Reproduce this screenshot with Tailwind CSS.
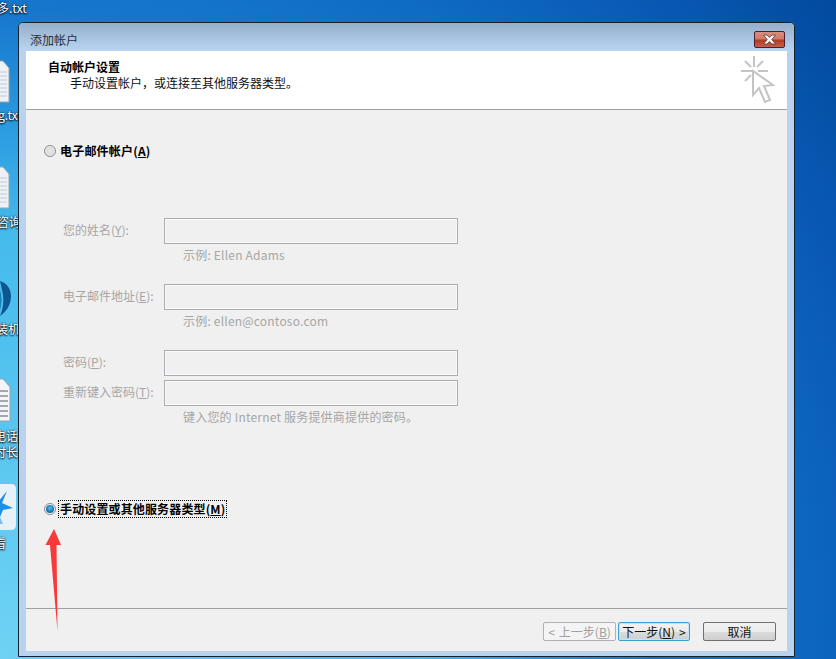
<!DOCTYPE html>
<html lang="zh">
<head>
<meta charset="utf-8">
<script src="https://cdn.jsdelivr.net/npm/@tailwindcss/browser@4"></script>
</head>
<body class="m-0 overflow-hidden">
<div class="relative w-[836px] h-[659px] overflow-hidden font-['Noto_Sans_CJK_SC','Liberation_Sans',sans-serif] bg-[radial-gradient(circle_at_0%_100%,#6fd2f4_0%,#45bbec_40%,#2a9be0_50%,#1676cc_61%,#0f6cc4_72%,#0a5cb8_84%,#024a9e_100%)]">

  <!-- desktop icons -->
  <div class="absolute left-[-3px] top-0 text-white text-[12px] leading-4 whitespace-nowrap [text-shadow:0_0_2px_#000,0_1px_2px_#000]">多.txt</div>

  <svg class="absolute left-0 top-[60px]" width="10" height="44" viewBox="0 0 10 44"><path d="M-8 1H3L9 8V42H-8Z" fill="#eef1f6" stroke="#9aa3ad"/><path d="M-6 12H7M-6 16H7M-6 20H7M-6 24H7M-6 28H7M-6 32H7M-6 36H7" stroke="#c3cad4"/></svg>
  <div class="absolute left-[-2px] top-[107px] whitespace-nowrap text-white text-[12px] leading-4 [text-shadow:0_0_2px_#000,0_1px_2px_#000]">g.txt</div>

  <svg class="absolute left-0 top-[166px]" width="10" height="44" viewBox="0 0 10 44"><path d="M-8 1H3L9 8V42H-8Z" fill="#eef1f6" stroke="#9aa3ad"/><path d="M-6 12H7M-6 16H7M-6 20H7M-6 24H7M-6 28H7M-6 32H7M-6 36H7" stroke="#c3cad4"/></svg>
  <div class="absolute left-[-3px] top-[214px] whitespace-nowrap text-white text-[12px] leading-4 [text-shadow:0_0_2px_#000,0_1px_2px_#000]">咨询</div>

  <svg class="absolute left-0 top-[281px]" width="12" height="36" viewBox="0 0 12 36"><path d="M0 0C7 2 11 8 11 15C11 24 6 31 0 35C3 28 4 21 3 14C2 9 1 4 0 0Z" fill="#0e568f"/><path d="M0 9C2 15 2 23 0 29Z" fill="#1a7fb8"/></svg>
  <div class="absolute left-[-4px] top-[321px] whitespace-nowrap text-white text-[12px] leading-4 [text-shadow:0_0_2px_#000,0_1px_2px_#000]">装机</div>

  <svg class="absolute left-0 top-[378px]" width="11" height="44" viewBox="0 0 11 44"><path d="M-8 1H3L10 9V43H-8Z" fill="#f2f4f7" stroke="#9aa3ad"/><path d="M0 13H8M0 18H8M0 23H8M0 28H8M0 33H8M0 38H8" stroke="#555c66"/></svg>
  <div class="absolute left-[-6px] top-[428px] whitespace-nowrap text-white text-[12px] leading-4 [text-shadow:0_0_2px_#000,0_1px_2px_#000]">电话</div>
  <div class="absolute left-[-6px] top-[444px] whitespace-nowrap text-white text-[12px] leading-4 [text-shadow:0_0_2px_#000,0_1px_2px_#000]">时长</div>

  <svg class="absolute left-0 top-[484px]" width="17" height="47" viewBox="0 0 17 47"><path d="M-6 0H11Q16 0 16 5V41Q16 46 11 46H-6Z" fill="#e6f1fa"/><path d="M7 7L2 19L13 24L3 26L0 33L-1 25L-2 18Z" fill="#1c8fe8"/><path d="M0 33L3 40H-1Z" fill="#7fbcec"/></svg>
  <div class="absolute left-[-6px] top-[535px] whitespace-nowrap text-white text-[12px] leading-4 [text-shadow:0_0_2px_#000,0_1px_2px_#000]">看</div>

  <!-- dialog window -->
  <div class="absolute left-[18px] top-[22px] w-[777px] h-[635px] rounded-t-[5px] border border-[#14222e] flex flex-col bg-[#b9d3ef]">
    <!-- title bar -->
    <div class="h-[28px] shrink-0 rounded-t-[4px] flex items-start justify-between pl-[11px] pr-[9px] bg-[linear-gradient(180deg,#95afcb_0%,#a9c4e0_55%,#bad5f1_100%)]">
      <span class="mt-[9px] text-[12px] leading-4 text-[#23303c]">添加帐户</span>
      <div class="mt-[8px] w-[31px] h-[17px] rounded-[2px] border border-[#4e1f2b] flex items-center justify-center bg-[linear-gradient(180deg,#d98f7e_0%,#cf7a68_48%,#b13a22_52%,#c4604a_100%)]">
        <svg width="15" height="11" viewBox="0 0 15 11"><path d="M1.5 1H5L7.5 3.4L10 1H13.5L9.8 5.5L13.5 10H10L7.5 7.6L5 10H1.5L5.2 5.5Z" fill="#f4f4f4" stroke="#5a3a3a" stroke-width="0.8"/></svg>
      </div>
    </div>
    <!-- client area -->
    <div class="mx-[7px] w-[761px] h-[600px] flex flex-col bg-[#f0f0f0]">
      <!-- header band -->
      <div class="relative h-[59px] shrink-0 bg-white border-b border-[#a0a0a0] pl-[22px] pt-[8px]">
        <div class="text-[12px] leading-4 font-bold text-black">自动帐户设置</div>
        <div class="pl-[22px] text-[12px] leading-4 text-[#111]">手动设置帐户，或连接至其他服务器类型。</div>
        <svg class="absolute left-[714px] top-[4px]" width="36" height="50" viewBox="0 0 36 50" fill="none" stroke="#c4c4c4"><path d="M14 1V12M14 21V27M1 16H12M18 16H28M5 6L11 12M23 6L17 12M5 26L11 20" stroke-width="2"/><path d="M13 16V40L19 33L25 47L30 45L24 31L33 30Z" fill="#fff" stroke-width="2"/></svg>
      </div>
      <!-- body -->
      <div class="flex-1 flex flex-col pl-[18px] pt-[32px]">
        <label class="flex items-center h-[18px] gap-[4px]">
          <span class="w-[12px] h-[12px] rounded-full border border-[#8a8a8a] bg-[radial-gradient(circle,#e8e8e8_0%,#cfcfcf_100%)] shadow-[inset_0_0_0_1px_#f5f5f5]"></span>
          <span class="text-[12px] leading-4 font-bold text-black tracking-[0.2px]">电子邮件帐户(<u>A</u>)</span>
        </label>

        <div class="mt-[58px] ml-[19px] grid grid-cols-[101px_294px] text-[12px] leading-4 text-[#a6a6a6]">
          <div class="h-[26px] flex items-center pb-[2px]">您的姓名(<u>Y</u>):</div>
          <div class="h-[26px] border border-[#abadb3] shadow-[inset_0_0_0_1px_#fafafa]"></div>
          <div></div>
          <div class="h-[40px] pl-[19px] pt-[3px] tracking-[0.2px]">示例: Ellen Adams</div>

          <div class="h-[26px] flex items-center pb-[2px]">电子邮件地址(<u>E</u>):</div>
          <div class="h-[26px] border border-[#abadb3] shadow-[inset_0_0_0_1px_#fafafa]"></div>
          <div></div>
          <div class="h-[40px] pl-[19px] pt-[3px] tracking-[0.2px]">示例: ellen@contoso.com</div>

          <div class="h-[26px] flex items-center pb-[2px]">密码(<u>P</u>):</div>
          <div class="h-[26px] border border-[#abadb3] shadow-[inset_0_0_0_1px_#fafafa]"></div>
          <div class="col-span-2 h-[4px]"></div>

          <div class="h-[26px] flex items-center pb-[2px]">重新键入密码(<u>T</u>):</div>
          <div class="h-[26px] border border-[#abadb3] shadow-[inset_0_0_0_1px_#fafafa]"></div>
          <div></div>
          <div class="h-[24px] pl-[19px] pt-[3px] whitespace-nowrap tracking-[0.2px]">键入您的 Internet 服务提供商提供的密码。</div>
        </div>

        <label class="mt-[70px] flex items-center h-[18px] gap-[3px]">
          <span class="w-[12px] h-[12px] rounded-full border border-[#8a8a8a] bg-[#f4f4f4] flex items-center justify-center">
            <span class="w-[8px] h-[8px] rounded-full bg-[radial-gradient(circle_at_50%_40%,#5cc0ee_0%,#1274b4_60%,#0b4f86_100%)]"></span>
          </span>
          <span class="text-[12px] leading-4 font-bold text-black tracking-[0.14px] outline-1 outline-dotted outline-black px-[1px]">手动设置或其他服务器类型(<u>M</u>)</span>
        </label>
      </div>
      <!-- footer -->
      <div class="h-[43px] shrink-0 border-t border-[#a0a0a0] flex items-start pt-[13px] pl-[517px] text-[12px] leading-4">
        <button class="w-[73px] h-[19px] rounded-[2px] border border-[#adb2b5] bg-[#f4f4f4] text-[#a0a0a0] flex items-center justify-center"><span class="mr-[4px]">&lt;</span>上一步(<u>B</u>)</button>
        <button class="ml-[2px] w-[72px] h-[19px] rounded-[2px] border border-[#3c9fd0] shadow-[inset_0_0_0_1px_#bfe6f7] bg-[linear-gradient(180deg,#f2f2f2_0%,#ebebeb_50%,#dcdcdc_52%,#cfcfcf_100%)] text-[#111] flex items-center justify-center">下一步(<u>N</u>)<span class="ml-[4px]">&gt;</span></button>
        <button class="ml-[13px] w-[73px] h-[19px] rounded-[2px] border border-[#707070] bg-[linear-gradient(180deg,#f2f2f2_0%,#ebebeb_50%,#dcdcdc_52%,#cfcfcf_100%)] text-[#111] flex items-center justify-center">取消</button>
      </div>
    </div>
  </div>

  <!-- red annotation arrow -->
  <svg class="absolute left-[44px] top-[528px]" width="20" height="104" viewBox="0 0 20 104"><path d="M10 1L17 17L12.5 17L13.5 103L6 17L1.5 17Z" fill="#f63a3a"/></svg>
</div>
</body>
</html>
